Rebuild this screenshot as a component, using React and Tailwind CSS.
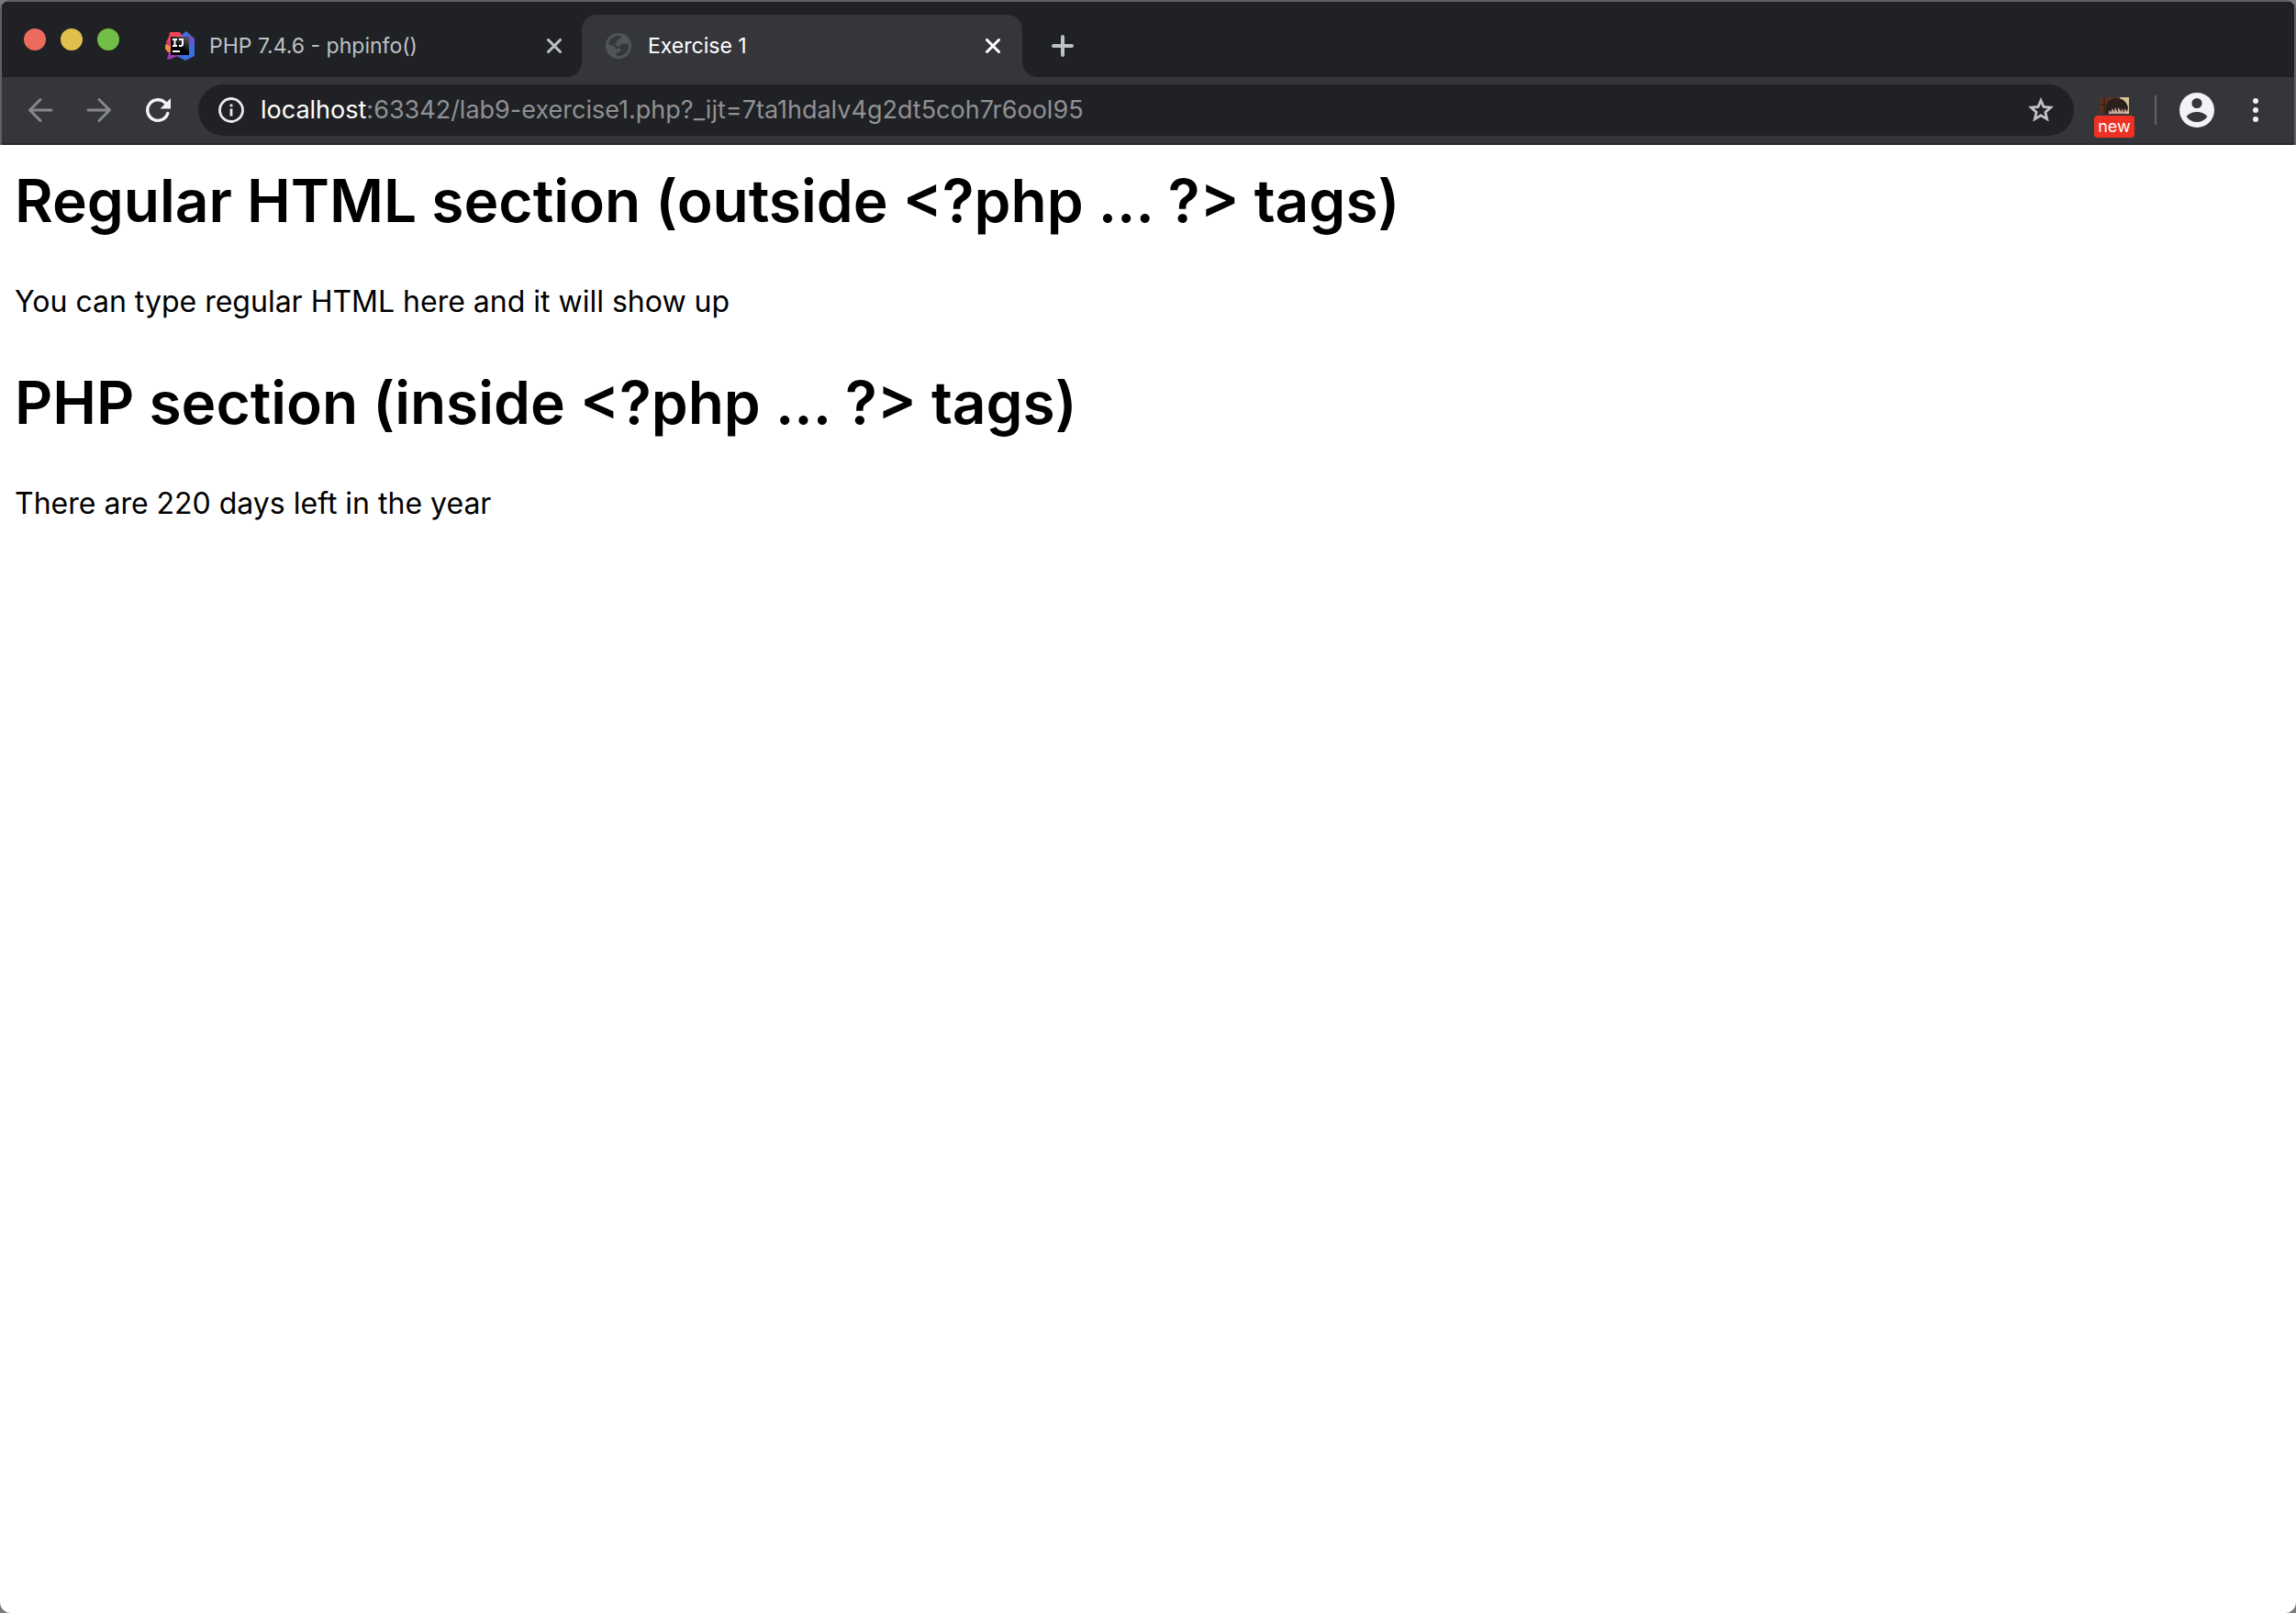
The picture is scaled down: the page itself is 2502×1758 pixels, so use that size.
import React from "react";

const CloseIcon = () => (
  <svg width="16" height="16" viewBox="0 0 16 16" fill="none" stroke="currentColor" strokeWidth="3" strokeLinecap="round" aria-hidden="true">
    <path d="M1.5 1.5l13 13M14.5 1.5l-13 13" />
  </svg>
);

const IdeIcon = () => (
  <svg width="32" height="32" viewBox="0 0 32 32" aria-hidden="true">
    <defs>
      <linearGradient id="ideBlue" x1="0" y1="0" x2="0.6" y2="1">
        <stop offset="0" stopColor="#2f7ff0" />
        <stop offset="0.3" stopColor="#4a6be0" />
        <stop offset="0.55" stopColor="#6b4fd0" />
        <stop offset="0.8" stopColor="#3b6fe0" />
      </linearGradient>
      <linearGradient id="ideBox" x1="0" y1="1" x2="0.6" y2="0">
        <stop offset="0.5" stopColor="#000" />
        <stop offset="1" stopColor="#4a4a4e" />
      </linearGradient>
    </defs>
    <path d="M0 15l3-2h5v10H3l-3-4z" fill="#f08a3c" />
    <path d="M2 31l2-8 4-2 11 4-1 2-7 1-4 2z" fill="#9a3fb0" />
    <path d="M5 1h11l4 6v8H3L1 12l3-6z" fill="#ee4459" />
    <path d="M1 11l4-1v6H3z" fill="#c93f86" />
    <path d="M18 4l5-4 9 8v19l-10 5-8-4 4-8z" fill="url(#ideBlue)" />
    <path d="M6 6h20v20H6z" fill="url(#ideBox)" />
    <path d="M8 9h5M8 16h5M10.500 9v7M15 9h4v5q0 2-2 2h-2" fill="none" stroke="#fff" strokeWidth="2" />
    <path d="M8 22h8" stroke="#fff" strokeWidth="2" />
  </svg>
);

const GlobeIcon = () => (
  <svg width="32" height="28" viewBox="-2 0 32 28" aria-hidden="true">
    <circle cx="14" cy="14" r="14" fill="#50555a" />
    <path d="M3 12.800A11.200 11.200 0 0 1 15.500 3Q18 4 16 6Q12.500 6.500 12.500 9Q11.500 11.300 9 11.500Q12 13 12 14.500H16.500Q15.500 12 18 11.700H24.900A11.200 11.200 0 0 1 12 25L11 21.500H14Q16.500 21 16.500 17H11.500Q10.500 13.500 3 12.800z" fill="#35363a" />
  </svg>
);

const Tab = ({ icon, title, active }) => (
  <div
    className={
      active
        ? "relative flex h-[68px] w-[480px] items-center rounded-t-2xl bg-[#35363a] px-6 text-white"
        : "flex h-[68px] w-[472px] items-center pl-[18px] pr-[22px] text-[#bdc1c6]"
    }
  >
    {active && (
      <>
        <span className="absolute -left-4 bottom-0 size-4 bg-[radial-gradient(circle_at_0_0,transparent_15.500px,#35363a_16px)]" />
        <span className="absolute -right-4 bottom-0 size-4 bg-[radial-gradient(circle_at_100%_0,transparent_15.500px,#35363a_16px)]" />
      </>
    )}
    {icon}
    <a href="#" className="ml-4 flex-1 text-[23px] leading-8">{title}</a>
    <button type="button" aria-label={"Close " + title}>
      <CloseIcon />
    </button>
  </div>
);

export default function App() {
  return (
    <div className="min-h-screen bg-[#77787a] font-['Inter',sans-serif]">
      <div className="flex min-h-screen flex-col overflow-hidden rounded-xl bg-white">
        <header className="border-x-2 border-t-2 border-[#5f6063] bg-[#202124]">
          <div className="flex h-[82px] items-end">
            <div className="flex gap-4 self-start pl-6 pt-[29px]">
              <button type="button" aria-label="Close window" className="size-6 rounded-full bg-[#ed6a5e]" />
              <button type="button" aria-label="Minimize window" className="size-6 rounded-full bg-[#e0c04c]" />
              <button type="button" aria-label="Zoom window" className="size-6 rounded-full bg-[#72be47]" />
            </div>
            <nav aria-label="Tabs" className="ml-8 flex">
              <Tab icon={<IdeIcon />} title="PHP 7.4.6 - phpinfo()" />
              <Tab icon={<GlobeIcon />} title="Exercise 1" active />
            </nav>
            <button type="button" aria-label="New tab" className="ml-8 flex h-[68px] items-center text-[#bdc1c6]">
              <svg width="24" height="24" viewBox="0 0 24 24" stroke="currentColor" strokeWidth="4" strokeLinecap="round" aria-hidden="true">
                <path d="M2 12h20M12 2v20" />
              </svg>
            </button>
          </div>
          <div className="flex h-[74px] items-center border-b-2 border-[#28292c] bg-[#35363a] pl-7 pr-[39px]">
            <div className="flex w-[186px] items-center gap-9 text-[#86888a]">
              <button type="button" aria-label="Back">
                <svg width="28" height="28" viewBox="0 0 28 28" fill="none" stroke="currentColor" strokeWidth="3" strokeLinecap="round" strokeLinejoin="round" aria-hidden="true">
                  <path d="M26 14H3M14 2.500L2.500 14 14 25.500" />
                </svg>
              </button>
              <button type="button" aria-label="Forward">
                <svg width="28" height="28" viewBox="0 0 28 28" fill="none" stroke="currentColor" strokeWidth="3" strokeLinecap="round" strokeLinejoin="round" aria-hidden="true">
                  <path d="M2 14h23M14 2.500L25.500 14 14 25.500" />
                </svg>
              </button>
              <button type="button" aria-label="Reload" className="text-[#f1f3f4]">
                <svg width="28" height="28" viewBox="0 0 28 28" fill="none" aria-hidden="true">
                  <path d="M22.500 6.500A11.300 11.300 0 1 0 24.800 17.500" stroke="currentColor" strokeWidth="3.400" strokeLinecap="round" />
                  <path d="M28 1v11.500H16.500z" fill="currentColor" />
                </svg>
              </button>
            </div>
            <div className="flex h-14 flex-1 items-center rounded-full bg-[#202124] pl-[22px] pr-5">
              <button type="button" aria-label="Site information">
                <svg width="28" height="28" viewBox="0 0 28 28" fill="none" aria-hidden="true">
                  <circle cx="14" cy="14" r="12.500" stroke="#e8eaed" strokeWidth="2.800" />
                  <path d="M12.600 12.500h2.800v8h-2.800zM12.600 7.500h2.800v2.800h-2.800z" fill="#e8eaed" />
                </svg>
              </button>
              <a href="#" className="ml-[18px] flex-1 text-[27px] leading-8 text-[#8f9194]">
                <span className="text-white">localhost</span>:63342/lab9-exercise1.php?_ijt=7ta1hdalv4g2dt5coh7r6ool95
              </a>
              <button type="button" aria-label="Bookmark">
                <svg width="32" height="32" viewBox="0 0 24 24" fill="#c4c6c9" stroke="#c4c6c9" strokeWidth="0.500" aria-hidden="true">
                  <path d="M22 9.240l-7.190-.62L12 2 9.190 8.630 2 9.240l5.460 4.730L5.820 21 12 17.270 18.180 21l-1.630-7.030L22 9.240zM12 15.400l-3.760 2.270 1-4.280-3.320-2.880 4.380-.38L12 6.100l1.710 4.040 4.380.38-3.320 2.880 1 4.280L12 15.400z" />
                </svg>
              </button>
            </div>
            <button type="button" aria-label="Extension" className="mb-1.5 ml-[22px] flex w-11 flex-col items-center gap-0.5 self-end">
              <svg width="32" height="18" viewBox="0 0 32 18" aria-hidden="true">
                <path d="M0 0h32v18H0z" fill="#5a3222" />
                <path d="M0 8h10M5 0v18" stroke="#3b2018" strokeWidth="1.500" />
                <path d="M22 0h10v18H22z" fill="#d9c39c" />
                <path d="M10 10h18v8H10z" fill="#c9a898" />
                <path d="M6 17Q6 2 17 1q11-1 14 10l-1 5-3-4v5l-3-5 0 4-4-5v6l-3-6-1 5-2-4-2 5-1-3-3 5-3-1z" fill="#2b1f1c" />
              </svg>
              <span className="flex h-6 w-11 items-center justify-center rounded bg-[#ee3124] text-lg leading-6 text-white">new</span>
            </button>
            <span className="ml-[22px] h-8 w-0.5 bg-[#616366]" />
            <button type="button" aria-label="Profile" className="ml-[25px]">
              <svg width="38" height="38" viewBox="0 0 38 38" aria-hidden="true">
                <circle cx="19" cy="19" r="19" fill="#f1f3f4" />
                <circle cx="19" cy="11.500" r="5.600" fill="#35363a" />
                <path d="M7.500 26Q12 21 19 21t11.500 5Q26 32 19 32T7.500 26z" fill="#35363a" />
              </svg>
            </button>
            <button type="button" aria-label="Menu" className="ml-[42px]">
              <svg width="6" height="26" viewBox="0 0 6 26" fill="#f1f3f4" aria-hidden="true">
                <circle cx="3" cy="3" r="3" />
                <circle cx="3" cy="13" r="3" />
                <circle cx="3" cy="23" r="3" />
              </svg>
            </button>
          </div>
        </header>
        <main className="px-4 pt-4 text-black">
          <h1 className="text-[64px] font-semibold leading-[90px]">Regular HTML section (outside &lt;?php ... ?&gt; tags)</h1>
          <p className="my-[43px] text-[32px] leading-[44px]">You can type regular HTML here and it will show up</p>
          <h1 className="text-[64px] font-semibold leading-[90px]">PHP section (inside &lt;?php ... ?&gt; tags)</h1>
          <p className="my-[43px] text-[32px] leading-[44px]">There are 220 days left in the year</p>
        </main>
      </div>
    </div>
  );
}
